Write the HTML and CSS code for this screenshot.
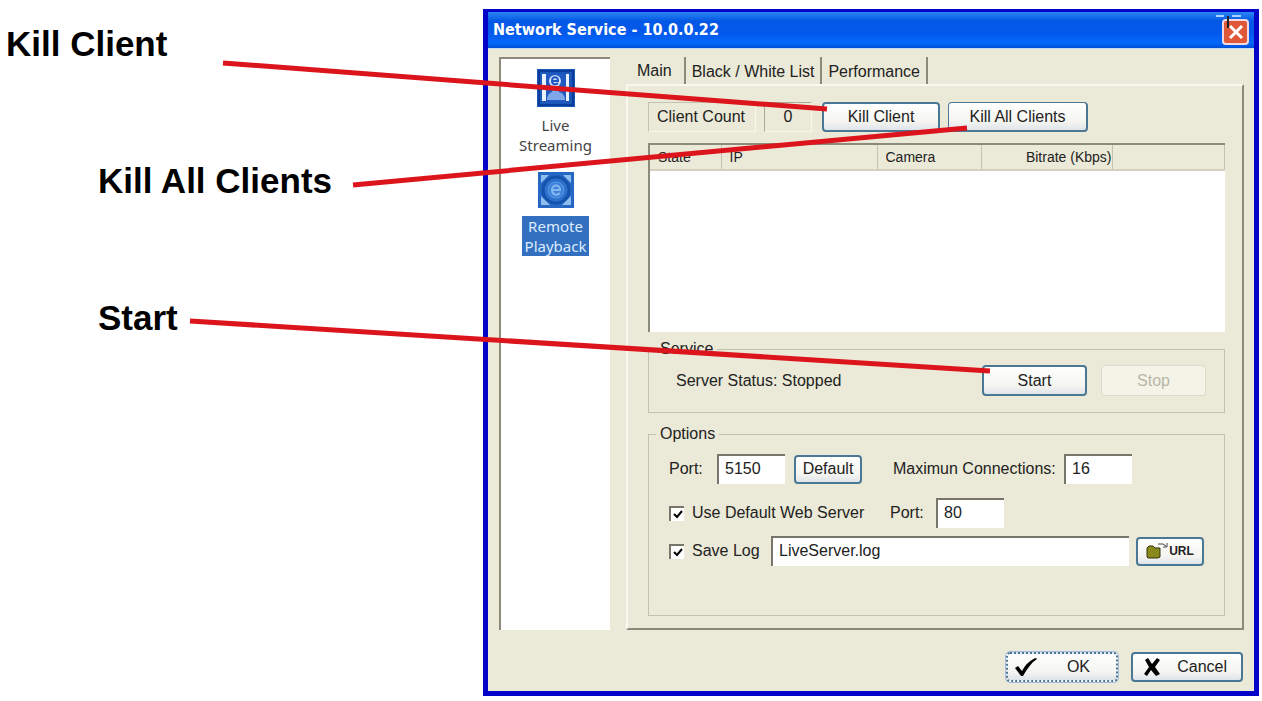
FILE: index.html
```html
<!DOCTYPE html>
<html lang="en">
    <head>
        <meta charset="utf-8" />
        <title>Network Service</title>
        <meta name="viewport" content="width=device-width, initial-scale=1" />
        <link rel="stylesheet" href="styles.css">
    </head>

    <body>
        <div class="page">
            <div class="callouts">
                <div class="callout callout-first">Kill Client</div>
                <div class="callout">Kill All Clients</div>
                <div class="callout">Start</div>
            </div>

            <div class="window">
                <div class="titlebar">
                    <h1>Network Service - 10.0.0.22</h1>
                    <button class="close" type="button" aria-label="Close">
                        <svg width="34" height="34" viewBox="0 0 34 34">
                            <rect x="7" y="7" width="25" height="24" rx="3" fill="#e0583a" stroke="#f4d8e0" stroke-width="2" />
                            <path d="M14 13l12 12M26 13L14 25" stroke="#fff" stroke-width="3" />
                            <path d="M0 3h8M16 3h9" stroke="#a8d4ff" stroke-width="2" />
                            <path d="M12 3v12" stroke="#222" stroke-width="2" />
                        </svg>
                    </button>
                </div>

                <div class="content">
                    <nav class="sidebar">
                        <a class="side-item" href="#live">
                            <svg width="38" height="38" viewBox="0 0 38 38">
                                <rect width="38" height="38" fill="#1c58b8" />
                                <rect x="2" y="2" width="34" height="34" fill="none" stroke="#0a3c9c" stroke-width="2" />
                                <rect x="5" y="5" width="27" height="27" fill="#e8f2ff" />
                                <rect x="9" y="5" width="20" height="28" fill="#2058c4" />
                                <circle cx="18" cy="12" r="6" fill="#cfe0fa" />
                                <path d="M15 12h6c0-5-6-5-6 0 0 4 4 4 6 2" fill="none" stroke="#2058c4" stroke-width="2" />
                                <path d="M16 19h5l1 4c4 1 6 4 6 8H10c0-4 2-7 5-8z" fill="#7fa8e8" />
                            </svg>
                            <span>Live<br>Streaming</span>
                        </a>
                        <a class="side-item selected" href="#playback">
                            <svg width="36" height="36" viewBox="0 0 36 36">
                                <rect width="36" height="36" fill="#2468c4" />
                                <path d="M3 3h8l-8 8zM33 3v8l-8-8zM3 33v-9l9 9zM33 33h-9l9-9z" fill="#8fbdf0" />
                                <circle cx="18" cy="18" r="13" fill="#2c70cc" stroke="#1452ac" stroke-width="3" />
                                <circle cx="18" cy="18" r="8" fill="#3c80d8" stroke="#5c9ce8" stroke-width="1" />
                                <path d="M14 18h8c0-6-8-6-8 0 0 5 5 6 8 3" fill="none" stroke="#84b8f4" stroke-width="2" />
                            </svg>
                            <span>Remote<br>Playback</span>
                        </a>
                    </nav>

                    <div class="main">
                        <div class="tabs">
                            <button class="tab active" type="button">Main</button>
                            <button class="tab" type="button">Black / White List</button>
                            <button class="tab" type="button">Performance</button>
                        </div>

                        <div class="panel">
                            <div class="client-row">
                                <span class="count-label">Client Count</span>
                                <span class="count">0</span>
                                <button class="btn kill" type="button">Kill Client</button>
                                <button class="btn kill-all" type="button">Kill All Clients</button>
                            </div>

                            <div class="client-list">
                                <table>
                                    <thead>
                                        <tr>
                                            <th class="col-state">State</th>
                                            <th class="col-ip">IP</th>
                                            <th class="col-camera">Camera</th>
                                            <th class="col-bitrate">Bitrate (Kbps)</th>
                                            <th></th>
                                        </tr>
                                    </thead>
                                    <tbody></tbody>
                                </table>
                            </div>

                            <fieldset class="service">
                                <legend>Service</legend>
                                <div class="row">
                                    <span class="status">Server Status: Stopped</span>
                                    <button class="btn server-btn" type="button">Start</button>
                                    <button class="btn server-btn" type="button" disabled>Stop</button>
                                </div>
                            </fieldset>

                            <fieldset class="options">
                                <legend>Options</legend>
                                <div class="row">
                                    <label class="port-label" for="port">Port:</label>
                                    <input class="num" id="port" type="text" value="5150" />
                                    <button class="btn default" type="button">Default</button>
                                    <label class="max-label" for="max">Maximun Connections:</label>
                                    <input class="num" id="max" type="text" value="16" />
                                </div>
                                <div class="row">
                                    <input id="web" type="checkbox" checked />
                                    <label class="web-label" for="web">Use Default Web Server</label>
                                    <label class="web-port-label" for="web-port">Port:</label>
                                    <input class="num" id="web-port" type="text" value="80" />
                                </div>
                                <div class="row log-row">
                                    <input id="save" type="checkbox" checked />
                                    <label class="save-label" for="save">Save Log</label>
                                    <input class="file" type="text" value="LiveServer.log" aria-label="Log file" />
                                    <button class="btn url" type="button">
                                        <svg width="22" height="18" viewBox="0 0 22 18">
                                            <path d="M1 6l2-2h4l2 2h5v9l-2 1H2l-1-1z" fill="#8a8a1c" stroke="#34340c" stroke-width="1" />
                                            <path d="M12 2h5l3 2M17 5h4V1" fill="none" stroke="#444" stroke-width="1" />
                                        </svg>
                                        <span>URL</span>
                                    </button>
                                </div>
                            </fieldset>
                        </div>
                    </div>
                </div>

                <div class="footer">
                    <button class="btn action ok" type="button">
                        <svg width="24" height="20" viewBox="0 0 24 20">
                            <path d="M1 11l3-2 4 5C12 7 16 3 22 1l1 1C17 6 13 12 9 19H7z" fill="#000" />
                        </svg>
                        <span>OK</span>
                    </button>
                    <button class="btn action" type="button">
                        <svg width="18" height="20" viewBox="0 0 18 20">
                            <path d="M2 3l3-2 4 6 5-6 3 2-5 7 5 7-4 2-5-6-4 6-3-2 5-7z" fill="#000" />
                        </svg>
                        <span>Cancel</span>
                    </button>
                </div>
            </div>

            <!-- leader lines from the callouts to the buttons -->
            <svg class="leaders" width="1000" height="400" viewBox="0 0 1000 400">
                <path d="M223 63L827 109M353 185L967 128M190 321L990 371" />
            </svg>
        </div>
    </body>
</html>
```

FILE: styles.css
```css
html,
body {
    margin: 0;
    padding: 0;
    --face: #ebe9d7;
    --shadow: #8c8a7a;
    --line: #c4c1ae;
    --text-color: #222;

    background: #fff;
    color: var(--text-color);
    font-family: 'Liberation Sans', sans-serif;
    font-size: 16px;
    line-height: 20px;
}

* {
    box-sizing: border-box;
}

button,
input {
    font: inherit;
    color: inherit;
    margin: 0;
}

.page {
    position: relative;
    display: flex;
    min-width: 1200px;
}

.callouts {
    flex: none;
    display: flex;
    flex-direction: column;
    gap: 93px;
    width: 483px;
    padding: 22px 0 0 98px;
}

.callout {
    color: #000;
    font-size: 35px;
    font-weight: bold;
    line-height: 44px;
    white-space: nowrap;
}

.callout-first {
    margin-left: -92px;
}

.leaders {
    position: absolute;
    top: 0;
    left: 0;
    pointer-events: none;
    fill: none;
    stroke: #dc141c;
    stroke-width: 5px;
}

.window {
    flex: 1;
    margin: 9px 3px 5px 0;
    background: var(--face);
    border: 5px solid #0404c8;
    border-top-width: 3px;
}

.titlebar {
    display: flex;
    align-items: center;
    justify-content: space-between;
    height: 36px;
    padding: 0 4px 0 5px;
    background: linear-gradient(#2a86f4, #0458e4 25%, #0458ec 60%, #0468fc 85%, #0050d8);
}

.titlebar h1 {
    margin: 0;
    color: #fff;
    font-family: 'DejaVu Sans Condensed', 'DejaVu Sans', sans-serif;
    font-size: 16px;
}

.close {
    height: 34px;
    padding: 0;
    background: none;
    border: 0;
}

.close svg {
    display: block;
}

.content {
    display: flex;
    gap: 16px;
    padding: 8px 10px 0 11px;
    border-top: 1px solid #c8dcf4;
}

.sidebar {
    display: flex;
    flex: none;
    flex-direction: column;
    gap: 17px;
    width: 111px;
    padding: 10px 0 0;
    background: #fff;
    border-top: 2px solid var(--shadow);
    border-left: 2px solid var(--shadow);
}

.side-item {
    display: flex;
    flex-direction: column;
    align-items: center;
    gap: 8px;
    color: #444;
    font-family: 'Noto Sans', sans-serif;
    font-size: 15px;
    line-height: 20px;
    text-align: center;
    text-decoration: none;
}

.selected span {
    padding: 0 3px;
    background: #3470c0;
    color: #dcecff;
}

.main {
    flex: 1;
}

.tabs {
    display: flex;
    height: 27px;
}

.tab {
    padding: 3px 6px 0;
    background: none;
    border: 0;
    border-right: 2px solid var(--shadow);
    white-space: nowrap;
}

.tab.active {
    padding: 0 12px 0 11px;
}

.panel {
    padding: 16px 17px 12px 20px;
    border: 2px solid;
    border-color: #faf9f0 var(--shadow) var(--shadow) #faf9f0;
}

.client-row {
    display: flex;
    gap: 8px;
    height: 30px;
}

.count-label,
.count {
    padding: 4px 8px;
    border: 1px solid;
    border-color: var(--line) #f8f7ee #f8f7ee var(--line);
}

.count-label {
    width: 108px;
}

.count {
    width: 48px;
    border-color: #aaa898 #f8f7ee #f8f7ee #aaa898;
    text-align: center;
}

.btn {
    padding: 0;
    background: linear-gradient(#fff, #f4f4f0 70%, #dfe4ea);
    border: 2px solid #4a7894;
    border-radius: 4px;
    white-space: nowrap;
}

.kill {
    width: 118px;
    margin-left: 2px;
}

.kill-all {
    width: 140px;
    border-width: 1px 2px 2px 1px;
}

.client-list {
    height: 189px;
    margin-top: 11px;
    background: #fff;
    border-top: 2px solid var(--shadow);
    border-left: 2px solid var(--shadow);
}

table {
    width: 100%;
    border-collapse: collapse;
    table-layout: fixed;
    background: var(--face);
}

th {
    height: 25px;
    padding: 0 0 0 8px;
    border-right: 1px solid var(--line);
    border-bottom: 2px solid #d4d1bf;
    font-size: 14px;
    font-weight: normal;
    text-align: left;
}

.col-state {
    width: 71px;
}

.col-ip {
    width: 156px;
}

.col-camera {
    width: 104px;
}

.col-bitrate {
    width: 131px;
    padding: 0;
    text-align: right;
}

fieldset {
    min-width: 0;
    margin: 0;
    padding: 0;
    border: 1px solid var(--line);
}

legend {
    margin-left: 7px;
    padding: 0 4px;
}

.row {
    display: flex;
    align-items: center;
    height: 31px;
}

.service {
    height: 74px;
    margin-top: 7px;
}

.service .row {
    margin-top: 6px;
    padding-left: 27px;
}

.status {
    width: 306px;
}

.server-btn {
    width: 105px;
    height: 31px;
    margin-right: 14px;
}

.btn:disabled {
    background: #f4f3e8;
    border: 1px solid #dcdacb;
    color: #b8b6a6;
}

.options {
    height: 192px;
    margin-top: 11px;
    padding-top: 10px;
}

.options .row {
    height: 30px;
    margin-bottom: 14px;
    padding: 0 20px;
}

.options .log-row {
    margin-top: -6px;
}

input[type='text'] {
    height: 30px;
    padding: 0 6px 2px;
    background: #fff;
    border: 0 solid #77766a;
    border-width: 2px 0 0 2px;
    border-radius: 0;
}

.num {
    width: 68px;
}

.port-label {
    width: 48px;
}

.default {
    width: 68px;
    height: 29px;
    margin-left: 9px;
}

.max-label {
    width: 171px;
    margin-left: 31px;
}

input[type='checkbox'] {
    appearance: none;
    width: 15px;
    height: 15px;
    background: #fff url("data:image/svg+xml,%3Csvg xmlns='http://www.w3.org/2000/svg' viewBox='0 0 13 13'%3E%3Cpath d='M3 6l3 3 5-6' fill='none' stroke='%23000' stroke-width='2'/%3E%3C/svg%3E");
    border: 0 solid #77766a;
    border-width: 2px 0 0 2px;
}

.web-label {
    width: 198px;
    margin-left: 8px;
}

.web-port-label {
    width: 46px;
}

.save-label {
    width: 79px;
    margin-left: 8px;
}

.file {
    flex: 1;
}

.url {
    display: flex;
    align-items: center;
    justify-content: center;
    gap: 1px;
    width: 68px;
    height: 29px;
    margin-left: 7px;
    font-size: 12px;
    font-weight: bold;
}

.footer {
    display: flex;
    justify-content: flex-end;
    gap: 13px;
    padding: 22px 11px 9px;
}

.action {
    display: flex;
    align-items: center;
    justify-content: space-between;
    width: 112px;
    height: 30px;
    padding: 0 14px 0 10px;
}

.ok {
    padding: 0 26px 0 6px;
    border-style: dotted;
    outline: 1px solid #a8bce0;
}
```
